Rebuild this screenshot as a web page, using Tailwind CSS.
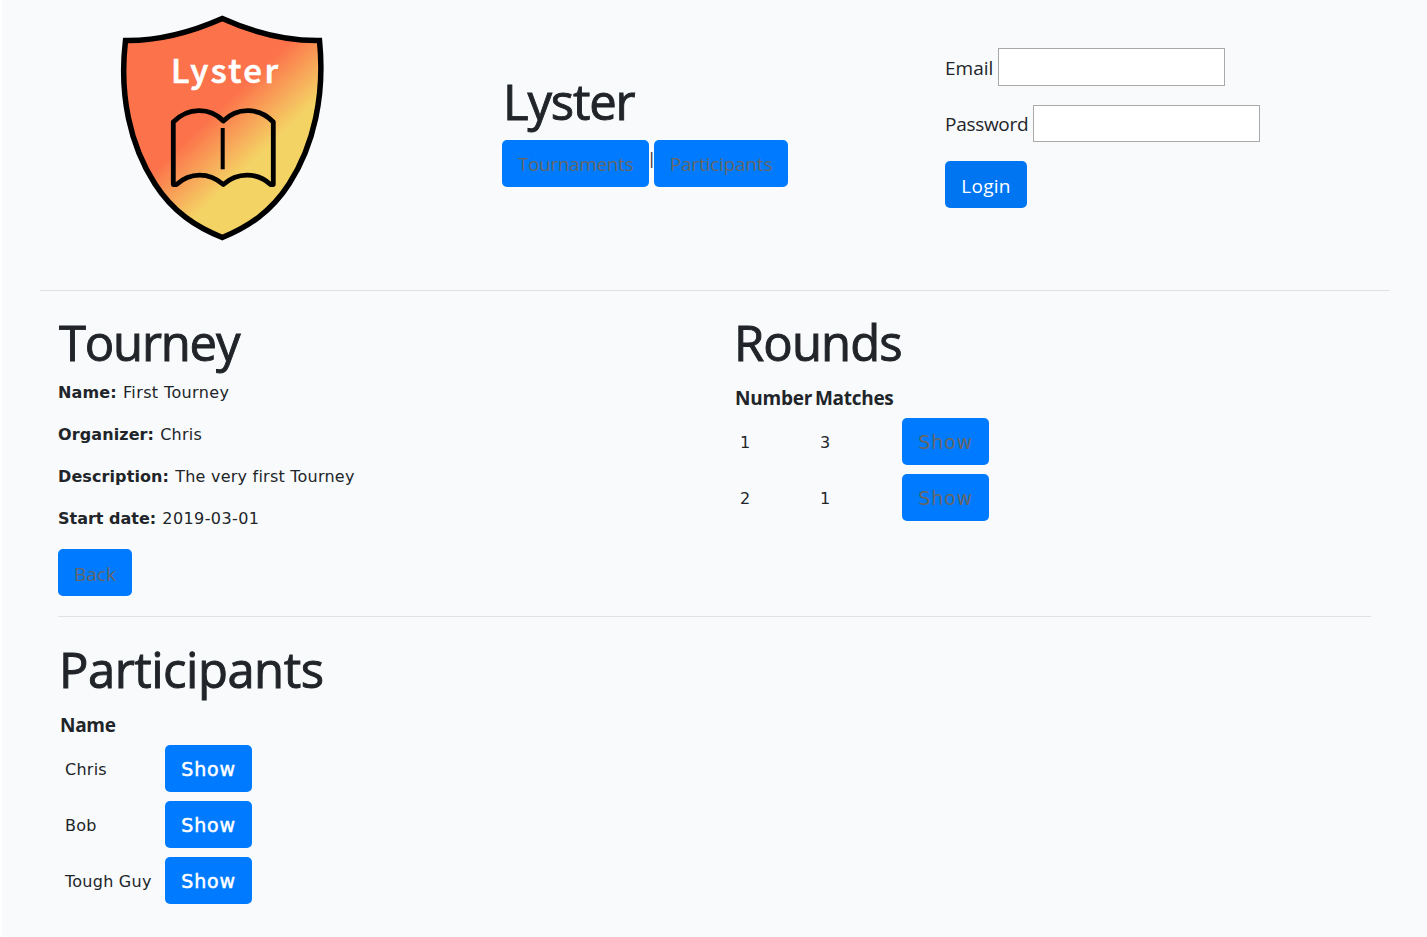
<!DOCTYPE html>
<html lang="en">
<head>
<meta charset="utf-8">
<title>Lyster</title>
<script src="https://cdn.jsdelivr.net/npm/@tailwindcss/browser@4"></script>
</head>
<body class="bg-[#f8fafc] text-[#212529] border-l-2 border-white h-[937px] overflow-hidden font-['Open_Sans',sans-serif]">
<header class="h-[290px] ml-[38px] w-[1350px] flex">
  <div class="w-[462px] pl-[77px] pt-[12px]">
    <svg width="210" height="232" viewBox="117 12 210 232" fill="none">
      <defs><linearGradient id="g" gradientUnits="userSpaceOnUse" x1="223" y1="106" x2="265" y2="150"><stop stop-color="#fc734b"/><stop offset="1" stop-color="#f4d365"/></linearGradient></defs>
      <path d="M222.300 18.500C250 31 283 41 319.500 40.500C325 95 314 145 289 184C271 212 248 227 222.300 237.500C196 227 173 212 155 184C130 145 119 95 125.500 40.500C161 41 194 31 222.300 18.500Z" fill="url(#g)" stroke="#000" stroke-width="5.500"/>
      <path d="M173.300 122V184.500H176.500C190 172 209 172 223.300 184.500C237 172 257 172 270.500 184.500H273.300V122C259 107 237 107 223.300 121C210 107 188 107 173.300 122Z" stroke="#000" stroke-width="4.800" stroke-linejoin="round"/>
      <path d="M222.700 128V169.300" stroke="#000" stroke-width="4"/>
      <text x="171" y="82.500" textLength="107" font-family="Noto Sans CJK JP, sans-serif" font-weight="500" font-size="33" fill="#fff" stroke="#fff" stroke-width="0.700">Lyster</text>
    </svg>
  </div>
  <div class="w-[443px] pt-[71px]">
    <h1 class="text-[49px] leading-[60px] h-[69px] pl-px [-webkit-text-stroke:0.9px_#212529] tracking-[-1.2px]">Lyster</h1>
    <div class="flex text-[19px]">
      <a class="w-[147px] h-[47px] rounded-[5px] bg-[#007bff] text-[#666] text-center leading-[48px] tracking-[-0.35px]">Tournaments</a>
      <span class="w-[5px] flex justify-center pt-[8px]"><span class="w-[5px] text-[17px] leading-[20px] indent-[-2px]">|</span></span>
      <a class="w-[134px] h-[47px] rounded-[5px] bg-[#007bff] text-[#666] text-center leading-[48px] tracking-[-0.2px]">Participants</a>
    </div>
  </div>
  <form class="pt-[48px] text-[19px]">
    <div class="flex items-center h-[38px] mb-[19px]"><label class="w-[53px] pt-[2px]">Email</label><input class="w-[227px] h-[38px] bg-white border border-[#a9a9a9]"></div>
    <div class="flex items-center h-[37px] mb-[19px]"><label class="w-[88px] pt-[2px] tracking-[-0.3px]">Password</label><input class="w-[227px] h-[37px] bg-white border border-[#a9a9a9]"></div>
    <button type="button" class="block w-[82px] h-[47px] rounded-[5px] bg-[#0075f2] text-white leading-[51px] tracking-[0.3px]">Login</button>
  </form>
</header>
<main class="ml-[38px] w-[1350px] border-t border-[#dfe1e3] pl-[18px] pr-[19px]">
  <div class="flex h-[326px] border-b border-[#dfe1e3]">
    <section class="w-[676px] pt-[21px]">
      <h1 class="text-[49px] leading-[60px] h-[70px] pl-px [-webkit-text-stroke:0.9px_#212529] tracking-[-1.2px]">Tourney</h1>
      <div class="font-['DejaVu_Sans',sans-serif] text-[16px] leading-[21px] space-y-[21px]">
        <p><b class="tracking-[0.15px]">Name:</b> <span class="ml-px tracking-[0.38px]">First Tourney</span></p>
        <p><b class="tracking-[0.1px]">Organizer:</b> <span class="ml-px tracking-[0.25px]">Chris</span></p>
        <p><b class="tracking-[0.1px]">Description:</b> <span class="ml-px tracking-[0.23px]">The very first Tourney</span></p>
        <p><b>Start date:</b> <span class="ml-px tracking-[0.4px]">2019-03-01</span></p>
      </div>
      <a class="block mt-[20px] w-[74px] h-[47px] rounded-[5px] bg-[#007bff] text-[#666] text-center text-[19px] leading-[50px]">Back</a>
    </section>
    <section class="pt-[21px]">
      <h1 class="text-[49px] leading-[60px] h-[69px] [-webkit-text-stroke:0.9px_#212529] tracking-[-0.9px]">Rounds</h1>
      <div class="grid grid-cols-[80px_88px_87px] font-['DejaVu_Sans',sans-serif] text-[16px]">
        <b class="text-[19px] leading-[34px] h-[37px] pl-px font-['Open_Sans'] tracking-[-0.2px]">Number</b><b class="text-[19px] leading-[34px] h-[37px] pl-px font-['Open_Sans'] tracking-[-0.3px]">Matches</b><b></b>
        <p class="pl-[6px] leading-[49px] h-[56px]">1</p><p class="pl-[6px] leading-[49px]">3</p><a class="h-[47px] rounded-[5px] bg-[#007bff] text-[#666] text-center text-[19px] leading-[49px] tracking-[0.8px]">Show</a>
        <p class="pl-[6px] leading-[49px] h-[56px]">2</p><p class="pl-[6px] leading-[49px]">1</p><a class="h-[47px] rounded-[5px] bg-[#007bff] text-[#666] text-center text-[19px] leading-[49px] tracking-[0.8px]">Show</a>
      </div>
    </section>
  </div>
  <section class="pt-[22px]">
    <h1 class="text-[49px] leading-[60px] h-[69px] pl-px [-webkit-text-stroke:0.9px_#212529] tracking-[-0.5px]">Participants</h1>
    <div class="grid grid-cols-[107px_87px] font-['DejaVu_Sans',sans-serif] text-[16px]">
      <b class="text-[19px] leading-[34px] h-[37px] pl-[2px] font-['Open_Sans'] tracking-[-0.3px]">Name</b><b></b>
      <p class="pl-[7px] h-[56px] leading-[49px] tracking-[0.25px]">Chris</p><a class="h-[47px] rounded-[5px] bg-[#007bff] text-white text-center text-[19px] leading-[48px] tracking-[0.8px] [-webkit-text-stroke:0.5px_white]">Show</a>
      <p class="pl-[7px] h-[56px] leading-[49px] tracking-[0.25px]">Bob</p><a class="h-[47px] rounded-[5px] bg-[#007bff] text-white text-center text-[19px] leading-[48px] tracking-[0.8px] [-webkit-text-stroke:0.5px_white]">Show</a>
      <p class="pl-[7px] h-[56px] leading-[49px] tracking-[0.25px]">Tough Guy</p><a class="h-[47px] rounded-[5px] bg-[#007bff] text-white text-center text-[19px] leading-[48px] tracking-[0.8px] [-webkit-text-stroke:0.5px_white]">Show</a>
    </div>
  </section>
</main>
</body>
</html>
